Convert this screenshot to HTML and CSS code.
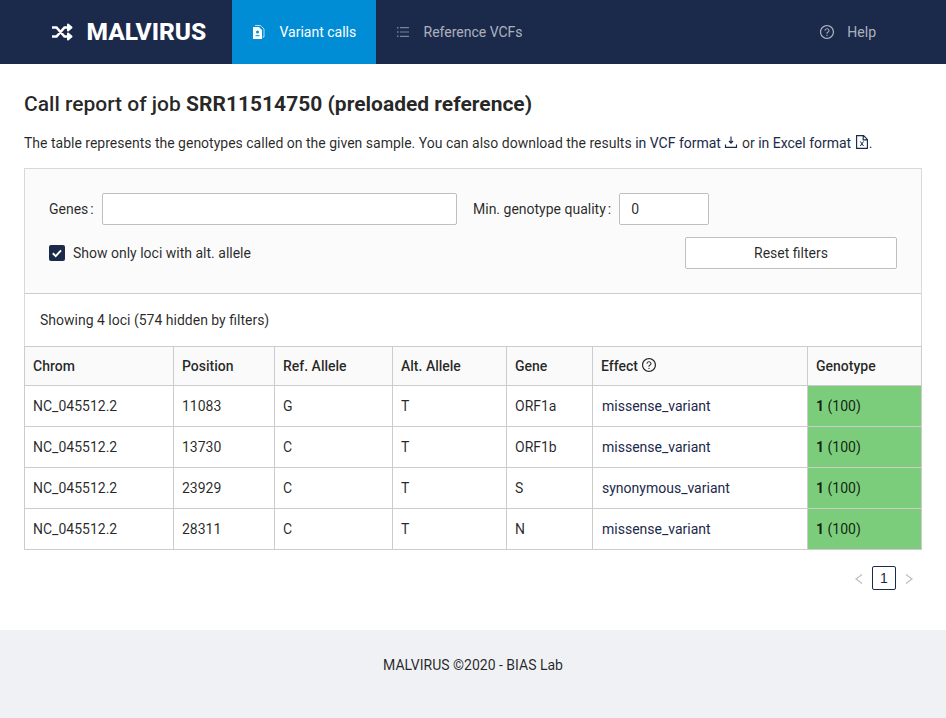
FILE: index.html
```html
<!DOCTYPE html>
<html lang="en">
<head>
<meta charset="utf-8">
<title>MALVIRUS</title>
<link rel="stylesheet" href="styles.css">
</head>
<body>
<svg class="defs" width="0" height="0">
  <symbol id="question" viewBox="64 64 896 896"><path d="M512 64C264.600 64 64 264.600 64 512s200.600 448 448 448 448-200.600 448-448S759.400 64 512 64zm0 820c-205.400 0-372-166.600-372-372s166.600-372 372-372 372 166.600 372 372-166.600 372-372 372z"/><path d="M623.600 316.700C593.600 290.400 554 276 512 276s-81.600 14.500-111.600 40.700C369.200 344 352 380.700 352 420v7.600c0 4.400 3.600 8 8 8h48c4.400 0 8-3.600 8-8V420c0-44.100 43.100-80 96-80s96 35.900 96 80c0 31.100-22 59.600-56.100 72.700-21.200 8.100-39.200 22.300-52.100 40.900-13.100 19-19.900 41.800-19.900 64.900V620c0 4.400 3.600 8 8 8h48c4.400 0 8-3.600 8-8v-22.700a48.300 48.300 0 0 1 30.900-44.800c59-22.700 97.100-74.700 97.100-132.500.1-39.300-17.100-76-48.300-103.300zM472 732a40 40 0 1 0 80 0 40 40 0 1 0-80 0z"/></symbol>
</svg>
<header class="header">
  <div class="logo">
    <svg width="21" height="18" viewBox="0 0 21 18"><path class="logo-line" d="M0 4.500H4.500L12.500 13.500H16M0 13.500H4.500L12.500 4.500H16"/><path class="logo-head" d="M16 1.500L19.500 4.500L16 7.500ZM16 10.500L19.500 13.500L16 16.500Z"/></svg>
    <span>MALVIRUS</span>
  </div>
  <nav class="menu">
    <a class="item active"><svg width="14" height="14" viewBox="0 0 14 14"><path fill="#fff" d="M1 2h6l3 3v9H1z"/><path class="back" d="M3 .5h5.500L12 4v8h-1.500"/><circle cx="5.500" cy="7" r="1.500" fill="#008dd6"/><path fill="#008dd6" d="M3.500 10.200h4v1h-4z"/></svg>Variant calls</a>
    <a class="item refs"><svg class="list" width="14" height="14" viewBox="0 0 14 14"><path d="M1 2h1.500v1.500H1zM4 2h9v1.200H4zM1 6.300h1.500v1.500H1zM4 6.400h9v1.200H4zM1 10.600h1.500v1.500H1zM4 10.800h9V12H4z"/></svg>Reference VCFs</a>
    <a class="item help"><svg width="14" height="14"><use href="#question"/></svg>Help</a>
  </nav>
</header>
<main class="content">
  <h1>Call report of job <strong>SRR11514750 (preloaded reference)</strong></h1>
  <p class="intro">The table represents the genotypes called on the given sample. You can also download the results <a>in VCF format <svg width="14" height="14" viewBox="0 0 14 14" class="icon"><path class="line" d="M7 1.500v6.500M5 6l2 2.200L9 6M1.500 9.500v2.900h11V9.500"/></svg></a> or <a>in Excel format <svg width="14" height="14" viewBox="0 0 14 14" class="icon"><path class="line" d="M1.600.6h7l3.800 3.800v9H1.600zM8.200.6v4.200h4.200"/><path class="cross" d="M5.300 6.500l3.200 4.500M8.500 6.500l-3.200 4.500"/></svg></a>.</p>
  <section class="panel">
    <form class="filters">
      <div class="row">
        <label class="genes"><span class="caption">Genes<i>:</i></span><input type="text"></label>
        <label><span class="caption">Min. genotype quality<i>:</i></span><input class="number" type="text" value="0"></label>
      </div>
      <div class="row second">
        <label class="check"><span class="box"><svg width="16" height="16" viewBox="0 0 16 16"><path d="M3.800 8.200l2.900 2.900L12 5.300"/></svg></span>Show only loci with alt. allele</label>
        <button type="button">Reset filters</button>
      </div>
    </form>
    <div class="summary">Showing 4 loci (574 hidden by filters)</div>
    <table>
      <colgroup><col class="c1"><col class="c2"><col class="c3"><col class="c4"><col class="c5"><col class="c6"><col class="c7"></colgroup>
      <thead><tr><th>Chrom</th><th>Position</th><th>Ref. Allele</th><th>Alt. Allele</th><th>Gene</th><th>Effect <svg class="icon hint" width="14" height="14"><use href="#question"/></svg></th><th>Genotype</th></tr></thead>
      <tbody>
        <tr><td>NC_045512.2</td><td>11083</td><td>G</td><td>T</td><td>ORF1a</td><td><a>missense_variant</a></td><td class="call"><b>1</b> (100)</td></tr>
        <tr><td>NC_045512.2</td><td>13730</td><td>C</td><td>T</td><td>ORF1b</td><td><a>missense_variant</a></td><td class="call"><b>1</b> (100)</td></tr>
        <tr><td>NC_045512.2</td><td>23929</td><td>C</td><td>T</td><td>S</td><td><a>synonymous_variant</a></td><td class="call"><b>1</b> (100)</td></tr>
        <tr><td>NC_045512.2</td><td>28311</td><td>C</td><td>T</td><td>N</td><td><a>missense_variant</a></td><td class="call"><b>1</b> (100)</td></tr>
      </tbody>
    </table>
  </section>
  <div class="pager">
    <svg width="8" height="14" viewBox="0 0 8 14"><path d="M7 3.500L1 8l6 4.500"/></svg>
    <span class="page">1</span>
    <svg width="8" height="14" viewBox="0 0 8 14"><path d="M1 3.500L7 8l-6 4.500"/></svg>
  </div>
</main>
<footer>MALVIRUS ©2020 - BIAS Lab</footer>
</body>
</html>
```
FILE: styles.css
```css
* { box-sizing: border-box; }
body { margin: 0; min-height: 718px; display: flex; flex-direction: column; background: #eff1f5; color: rgba(0,0,0,.85); font: 14px/22px Roboto, sans-serif; }
.defs { position: absolute; }
svg { fill: currentColor; flex: none; }
.header { height: 64px; display: flex; background: #1b294b; color: #fff; }
.logo { width: 232px; padding-left: 52px; display: flex; align-items: center; gap: 13.5px; font-size: 24.5px; font-weight: 800; }
.logo-line { fill: none; stroke: currentColor; stroke-width: 2.6; }
.logo-head { stroke: currentColor; stroke-width: 2; stroke-linejoin: round; }
.menu { flex: 1; display: flex; padding-right: 50px; }
.item { display: flex; align-items: center; gap: 13px; padding: 0 20px; color: rgba(255,255,255,.65); }
.item.active { width: 144px; gap: 13.5px; background: #008dd6; color: #fff; white-space: nowrap; }
.refs { gap: 13.5px; }
.back { fill: none; stroke: #fff; opacity: .7; }
.list { opacity: .65; }
.help { margin-left: auto; }
.content { background: #fff; height: 566px; padding: 24px; }
h1 { margin: 2px 0 14px; font-size: 21px; line-height: 28px; font-weight: 500; }
h1 strong { font-weight: 700; }
.intro { margin: 0 0 14px; }
a { color: #1b294b; }
.icon { vertical-align: -1.75px; }
.line { fill: none; stroke: currentColor; stroke-width: 1.15; }
.cross { fill: none; stroke: currentColor; stroke-width: 1; }
.intro .icon { position: relative; top: -1px; }
.hint { position: relative; top: -1px; left: 1px; }
.panel { border: 1px solid #d9d9d9; }
.filters { background: #fbfbfb; height: 125px; padding: 24px; border-bottom: 1px solid #ccc; }
.row { display: flex; gap: 16px; }
.row label { display: flex; align-items: center; }
.genes { width: 408px; }
.genes input { flex: 1; min-width: 0; }
.caption { margin-right: 8px; white-space: nowrap; }
.caption i { font-style: normal; margin-left: 2px; }
input, button { height: 32px; border: 1px solid #bfbfbf; border-radius: 2px; background: #fff; color: inherit; font: inherit; padding: 0 11px; }
.number { width: 90px; }
.second { margin-top: 12px; justify-content: space-between; }
.second .check { gap: 8px; }
.box { width: 16px; height: 16px; border-radius: 2px; background: #1b294b; display: flex; }
.box path { fill: none; stroke: #fff; stroke-width: 2; }
button { width: 212px; }
.summary { height: 52px; padding: 15px; }
table { width: 898px; margin: 0 -1px -1px; table-layout: fixed; border-collapse: collapse; }
.c1 { width: 149px; } .c2 { width: 101px; } .c3 { width: 118px; } .c4 { width: 114px; } .c5 { width: 86px; } .c6 { width: 215px; }
th, td { border: 1px solid #ccc; padding: 0 8px; text-align: left; height: 41px; }
th { height: 39px; background: #fafafa; font-weight: 500; }
td a { margin-left: 1px; }
.call { background: #7bcd7b; }
.call b { font-weight: 700; }
.pager { display: flex; justify-content: flex-end; align-items: center; gap: 9px; padding-right: 9px; margin-top: 16px; }
.pager path { fill: none; stroke: #bfbfbf; stroke-width: 1.2; }
.page { width: 24px; height: 24px; border: 1px solid #1b294b; border-radius: 2px; text-align: center; color: #1b294b; font-family: "Liberation Sans", sans-serif; }
footer { padding: 24px; text-align: center; }
```
